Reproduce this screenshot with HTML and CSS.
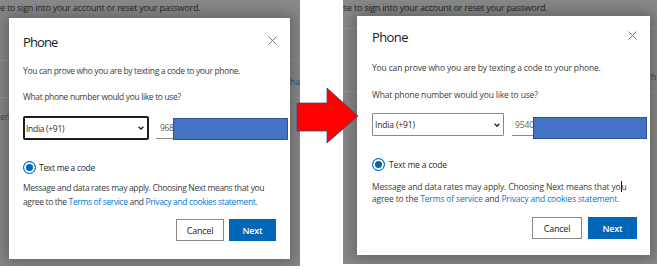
FILE: index.html
```html
<!DOCTYPE html>
<html lang="en">
<head>
<meta charset="utf-8">
<title>Phone verification – before and after</title>
<link rel="stylesheet" href="styles.css">
</head>
<body>
<div class="canvas">
  <section class="shot shot-a">
    <div class="page">
      <p class="page-top">e to sign into your account or reset your password.</p>
      <div class="page-band"><span class="peek peek-right">ha</span></div>
      <div class="page-row"><span class="peek peek-left">en</span></div>
    </div>
    <div class="dialog">
      <div class="dlg-head">
        <h2 class="dlg-title">Phone</h2>
        <svg class="dlg-close" viewBox="0 0 10 10" aria-label="Close"><path d="M0.5 0.5L9.5 9.5M9.5 0.5L0.5 9.5"/></svg>
      </div>
      <p class="dlg-text t1">You can prove who you are by texting a code to your phone.</p>
      <p class="dlg-text t2">What phone number would you like to use?</p>
      <div class="phone-row">
        <div class="select"><span>India (+91)</span><svg class="chev" viewBox="0 0 6 4"><path d="M0.6 0.7L3 3.1L5.4 0.7"/></svg></div>
        <div class="phone-input">968</div>
      </div>
      <div class="radio-row"><span class="radio"></span><span>Text me a code</span></div>
      <p class="dlg-note">Message and data rates may apply. Choosing Next means that you<br>agree to the <a class="lnk">Terms of service</a> and <a class="lnk">Privacy and cookies statement</a>.</p>
      <div class="actions">
        <button class="btn btn-cancel">Cancel</button>
        <button class="btn btn-next">Next</button>
      </div>
    </div>
    <div class="redact"></div>
  </section>

  <div class="gap"></div>

  <section class="shot shot-b">
    <div class="page">
      <p class="page-top">se to sign into your account or reset your password.</p>
      <div class="page-band"><span class="peek peek-right">h</span></div>
      <div class="page-row"><span class="peek peek-left">c</span></div>
    </div>
    <div class="dialog">
      <div class="dlg-head">
        <h2 class="dlg-title">Phone</h2>
        <svg class="dlg-close" viewBox="0 0 10 10" aria-label="Close"><path d="M0.5 0.5L9.5 9.5M9.5 0.5L0.5 9.5"/></svg>
      </div>
      <p class="dlg-text t1">You can prove who you are by texting a code to your phone.</p>
      <p class="dlg-text t2">What phone number would you like to use?</p>
      <div class="phone-row">
        <div class="select"><span>India (+91)</span><svg class="chev" viewBox="0 0 6 4"><path d="M0.6 0.7L3 3.1L5.4 0.7"/></svg></div>
        <div class="phone-input">9540</div>
      </div>
      <div class="radio-row"><span class="radio"></span><span>Text me a code</span></div>
      <p class="dlg-note">Message and data rates may apply. Choosing Next means that yo<span class="caret"></span>u<br>agree to the <a class="lnk">Terms of service</a> and <a class="lnk">Privacy and cookies statement</a>.</p>
      <div class="actions">
        <button class="btn btn-cancel">Cancel</button>
        <button class="btn btn-next">Next</button>
      </div>
    </div>
    <div class="redact"></div>
  </section>

  <svg class="arrow" viewBox="0 0 64 60" aria-hidden="true">
    <polygon points="1,17 31,17 31,2 62,30 31,57 31,45 1,45"/>
  </svg>
</div>
</body>
</html>
```

FILE: styles.css
```css
html, body {
  margin: 0;
  padding: 0;
  background: #ffffff;
}

.canvas {
  position: relative;
  display: flex;
  align-items: flex-start;
  width: 657px;
  height: 270px;
  overflow: hidden;
  background: #ffffff;
  font-family: "Open Sans", "Noto Sans", sans-serif;
}

.shot {
  position: relative;
  overflow: hidden;
  background: #898989;
  flex: none;
}

.shot-a { width: 300px; height: 266px; }
.shot-b { width: 314px; height: 264px; }

.gap { width: 43px; flex: none; }

/* dimmed page behind the dialog */
.page {
  display: flex;
  flex-direction: column;
}

.page-top {
  margin: 0;
  padding-top: 2px;
  font-size: 9px;
  line-height: 12px;
  letter-spacing: -0.25px;
  color: #262626;
  white-space: nowrap;
}

.page-band {
  display: flex;
  margin-top: 46px;
  height: 36px;
  border-top: 1px solid #959595;
  border-bottom: 1px solid #959595;
}

.page-row {
  display: flex;
  padding-top: 13px;
}

.peek {
  font-size: 8.5px;
  line-height: 12px;
  color: #2d4f78;
  white-space: nowrap;
}

.peek-right { margin-left: 290px; margin-top: 15px; }
.peek-left { margin-left: 0; }

.shot-b .page-band { margin-top: 14px; height: 62px; }
.shot-b .peek-right { margin-left: 308px; margin-top: 42px; }
.shot-b .page-row { padding-top: 14px; }

/* dialog */
.dialog {
  position: absolute;
  display: flex;
  flex-direction: column;
  box-sizing: border-box;
  background: #ffffff;
  box-shadow: 0 0 14px 4px rgba(0, 0, 0, 0.28);
  color: #3d3d3d;
}

.shot-a .dialog {
  left: 9px;
  top: 18px;
  width: 281px;
  height: 241px;
  padding: 16px 13px 0 14px;
}

.shot-b .dialog {
  left: 14px;
  top: 16px;
  width: 293px;
  height: 239px;
  padding: 13px 13px 0 15px;
}

.dlg-head {
  display: flex;
  justify-content: space-between;
  align-items: flex-start;
  height: 16px;
}

.dlg-title {
  margin: 0;
  font-size: 13px;
  line-height: 16px;
  font-weight: 400;
  letter-spacing: -0.9px;
  color: #1b1b1b;
}

.shot-b .dlg-title { letter-spacing: -0.6px; }

.dlg-close {
  width: 9px;
  height: 9px;
  margin-top: 2px;
  fill: none;
  stroke: #6b6b6b;
  stroke-width: 1;
}

.dlg-text {
  margin: 0;
  font-size: 8.5px;
  line-height: 12px;
  letter-spacing: -0.35px;
  white-space: nowrap;
}

.t1 { margin-top: 15px; }
.t2 { margin-top: 14px; }

.shot-b .dlg-text { letter-spacing: -0.15px; }
.shot-b .t1 { margin-top: 17px; }
.shot-b .t2 { margin-top: 15px; }

.phone-row {
  display: flex;
  align-items: flex-start;
  margin-top: 13px;
}

.shot-b .phone-row { margin-top: 12px; }

.select {
  display: flex;
  align-items: center;
  justify-content: space-between;
  box-sizing: border-box;
  width: 126px;
  height: 24px;
  padding: 0 3px 0 1px;
  border: 2px solid #1f1f1f;
  border-radius: 2px;
  font-size: 8.5px;
  letter-spacing: -0.3px;
  color: #2b2b2b;
}

.shot-b .select {
  width: 132px;
  height: 23px;
  padding: 0 3px 0 2px;
  border: 1px solid #8a8886;
  border-radius: 1px;
  letter-spacing: -0.15px;
}

.chev {
  width: 6px;
  height: 4px;
  fill: none;
  stroke: #1b1b1b;
  stroke-width: 1.3;
}

.phone-input {
  display: flex;
  align-items: center;
  box-sizing: border-box;
  flex: 1;
  height: 23px;
  margin-left: 7px;
  padding-left: 4px;
  border-bottom: 1px solid #8a8886;
  font-size: 8.5px;
  letter-spacing: -0.3px;
  color: #605e5c;
}

.shot-b .phone-input {
  height: 23px;
  margin-left: 8px;
  padding-left: 3px;
  letter-spacing: -0.15px;
}

.radio-row {
  display: flex;
  align-items: center;
  gap: 3px;
  height: 14px;
  margin-top: 20px;
  font-size: 8.5px;
  letter-spacing: -0.3px;
  color: #2b2b2b;
}

.shot-b .radio-row { margin-top: 21px; gap: 4px; letter-spacing: -0.15px; }

.radio {
  box-sizing: border-box;
  width: 13px;
  height: 13px;
  border: 1px solid #0067b8;
  border-radius: 50%;
  background: #0067b8;
  box-shadow: inset 0 0 0 2px #ffffff;
}

.dlg-note {
  margin: 7px 0 0;
  font-size: 8.5px;
  line-height: 14px;
  letter-spacing: -0.35px;
  white-space: nowrap;
}

.shot-b .dlg-note {
  margin-top: 10px;
  line-height: 12px;
  letter-spacing: -0.15px;
}

.lnk { color: #0078d4; }

.caret {
  display: inline-block;
  width: 0;
  height: 11px;
  border-left: 1px solid #1b1b1b;
  vertical-align: -2px;
}

.actions {
  display: flex;
  justify-content: flex-end;
  gap: 5px;
  margin-top: 10px;
  margin-right: 1px;
}

.shot-b .actions { margin-top: 12px; margin-right: 0; gap: 6px; }

.btn {
  box-sizing: border-box;
  height: 22px;
  padding: 0;
  font-family: inherit;
  font-size: 9px;
  letter-spacing: -0.2px;
  border-radius: 0;
}

.btn-cancel {
  width: 48px;
  background: #ffffff;
  border: 1px solid #8a8886;
  color: #1b1b1b;
}

.btn-next {
  width: 47px;
  background: #0067b8;
  border: none;
  color: #ffffff;
  font-weight: 600;
}

.shot-b .btn-cancel { width: 50px; }
.shot-b .btn-next { width: 49px; }

/* redaction boxes drawn over the screenshot */
.redact {
  position: absolute;
  box-sizing: border-box;
  background: #4472c4;
  border: 1px solid #2f528f;
}

.shot-a .redact { left: 173px; top: 118px; width: 115px; height: 22px; }
.shot-b .redact { left: 190px; top: 117px; width: 114px; height: 22px; }

/* red arrow between the two screenshots */
.arrow {
  position: absolute;
  left: 296px;
  top: 86px;
  width: 64px;
  height: 60px;
}

.arrow polygon {
  fill: #ff0000;
  stroke: #2f528f;
  stroke-width: 0.8;
}
```
